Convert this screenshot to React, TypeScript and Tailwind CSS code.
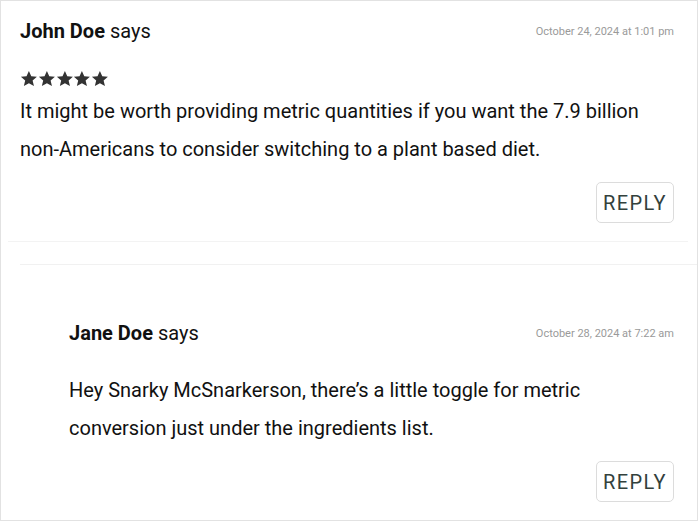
const font = { fontFamily: "Roboto, 'Liberation Sans', sans-serif" };

function StarRow({ count }: { count: number }) {
  return (
    <div className="flex h-[18px] items-center">
      {Array.from({ length: count }).map((_, i) => (
        <svg key={i} viewBox="0 0 24 24" className="h-[18px] w-[17.8px] fill-[#333]">
          <path d="M12 1.2l3.2 7 7.6.7-5.8 5.1 1.8 7.6L12 17.7l-6.8 3.9 1.8-7.6-5.8-5.1 7.6-.7z" />
        </svg>
      ))}
    </div>
  );
}

function ReplyButton() {
  return (
    <button className="flex h-[41px] w-[78px] items-center justify-center self-end rounded-[5px] border border-[#dcdcdc] bg-white text-[20px] tracking-[1.4px] text-[#33413d]">
      REPLY
    </button>
  );
}

function Header({ name, date }: { name: string; date: string }) {
  return (
    <div className="flex h-[26px] items-center justify-between">
      <p className="text-[20px] leading-[26px] text-[#111]">
        <span className="font-bold">{name}</span> says
      </p>
      <span className="mt-[3px] text-[11px] text-[#9a9a9a]">{date}</span>
    </div>
  );
}

export default function App() {
  return (
    <div style={font} className="h-[521px] w-[698px] overflow-hidden border border-[#e2e2e2] bg-white">
      <article className="flex flex-col pb-[18px] pl-[19px] pr-[23px] pt-[17px]">
        <Header name="John Doe" date="October 24, 2024 at 1:01 pm" />
        <div className="mt-[26px]">
          <StarRow count={5} />
        </div>
        <p className="mt-[4px] max-w-[640px] text-[20px] leading-[38px] text-[#111]">
          It might be worth providing metric quantities if you want the 7.9 billion non-Americans to consider
          switching to a plant based diet.
        </p>
        <div className="mt-[14px] flex flex-col">
          <ReplyButton />
        </div>
      </article>
      <div className="ml-[7px] mr-[9px] h-px bg-[#f3f3f3]" />

      <div className="ml-[19px] mt-[22px] border-t border-[#f1f1f1]">
        <article className="flex flex-col pl-[49px] pr-[23px] pt-[55px]">
          <Header name="Jane Doe" date="October 28, 2024 at 7:22 am" />
          <p className="mt-[25px] max-w-[590px] text-[20px] leading-[38px] text-[#111]">
            Hey Snarky McSnarkerson, there&rsquo;s a little toggle for metric conversion just under the
            ingredients list.
          </p>
          <div className="mt-[14px] flex flex-col">
            <ReplyButton />
          </div>
        </article>
      </div>
    </div>
  );
}
